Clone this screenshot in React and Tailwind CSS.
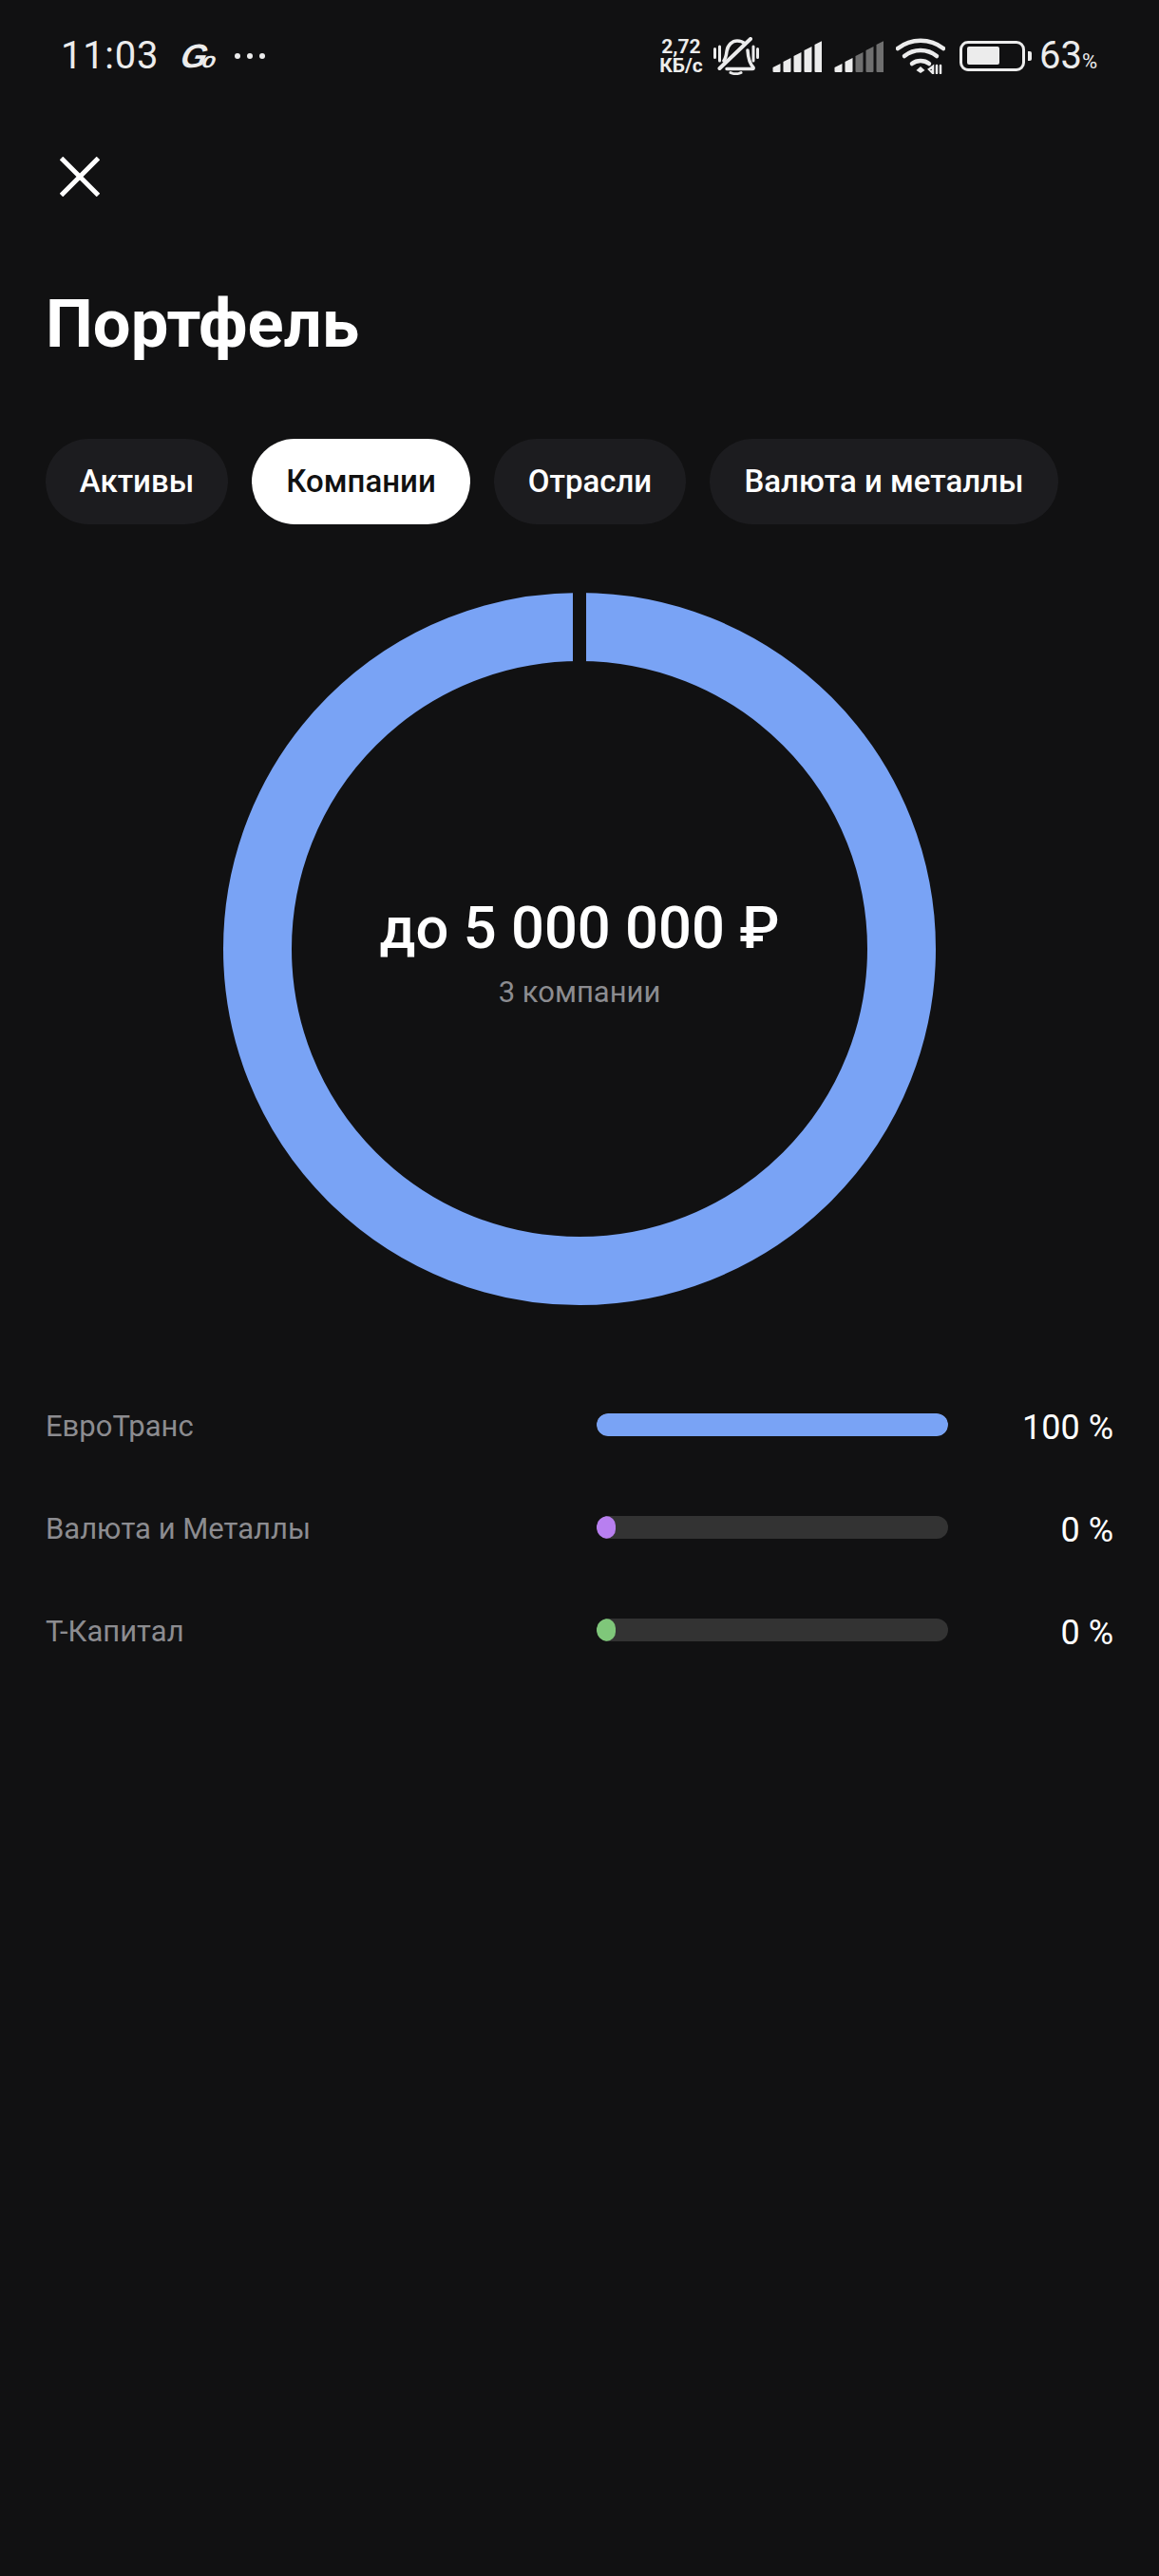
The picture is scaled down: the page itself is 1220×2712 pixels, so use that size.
import React from 'react';

const roboto = 'font-[Roboto,sans-serif]';

const tabs = [
  { label: 'Активы', width: 'w-[192px]' },
  { label: 'Компании', width: 'w-[230px]', active: true },
  { label: 'Отрасли', width: 'w-[202px]' },
  { label: 'Валюта и металлы', width: 'w-[367px]' },
];

const rows = [
  { name: 'ЕвроТранс', value: '100 %', fill: 'w-full bg-[#79a3f5]' },
  { name: 'Валюта и Металлы', value: '0 %', fill: 'w-[20px] bg-[#b87ff0]' },
  { name: 'Т-Капитал', value: '0 %', fill: 'w-[20px] bg-[#7fc77a]' },
];

function Signal({ dim }) {
  const heights = [9, 15, 21, 27, 33];
  return (
    <svg width="52" height="34" viewBox="0 0 52 34">
      {heights.map((h, i) => (
        <path
          key={i}
          d={`M${i * 11 + 0.5} ${34 - Math.max(h - 4, 3)} L${i * 11 + 8.5} ${34 - h} V33 a1 1 0 0 1 -1 1 H${i * 11 + 1.5} a1 1 0 0 1 -1 -1 Z`}
          fill={dim && i > 1 ? '#6f6f6f' : '#ececec'}
        />
      ))}
    </svg>
  );
}

function BellMuted() {
  return (
    <svg width="48" height="40" viewBox="0 0 48 40" fill="none" stroke="#ececec" strokeWidth="3.5" strokeLinecap="round" strokeLinejoin="round">
      <path d="M1.5 12.5v9M6.5 10v15M42 10v15M46.5 12.5v9" strokeWidth="3" />
      <path d="M11 25c2-3 2.500-6 3-10 1-7 6-11 11-11 3 0 6 1 8 3" />
      <path d="M36 14c.5 8 2 14 6 18 .5 1 0 1.500-1 1.500H14" />
      <path d="M18 37.500c3 1.500 8 1.500 11 0" strokeWidth="3" />
      <path d="M39 2 6.500 33" strokeWidth="4" />
    </svg>
  );
}

function Wifi() {
  return (
    <svg width="52" height="38" viewBox="0 0 52 38" fill="none" stroke="#ececec" strokeWidth="4.5" strokeLinecap="round">
      <path d="M2 11c14-11 34-11 48 0" />
      <path d="M9 19c10-8 24-8 34 0" />
      <path d="M17 27c5-4 13-4 18 0" />
      <path d="M26 30l4.500 4-4.500 3-4.500-3z" fill="#ececec" stroke="none" />
      <path d="M35 33l4-3v7zM43 29v8M47 29v8" strokeWidth="2.5" />
    </svg>
  );
}

function StatusBar() {
  return (
    <div className={`flex h-[115px] items-center pl-[64px] pr-[65px] pt-[2px] text-[#ececec] ${roboto}`}>
      <span className="text-[40px] leading-none tracking-[0.7px]">11:03</span>
      <span className="ml-[24px] flex w-[36px] -skew-x-12 items-end font-['Liberation_Sans',sans-serif] font-bold italic leading-none">
        <span className="text-[35px] leading-[30px]">G</span>
        <span className="-ml-[4px] text-[23px] leading-[22px]">o</span>
      </span>
      <div className="ml-[20px] flex gap-[7px]">
        <span className="size-[6px] rounded-full bg-[#ececec]" />
        <span className="size-[6px] rounded-full bg-[#ececec]" />
        <span className="size-[6px] rounded-full bg-[#ececec]" />
      </div>
      <div className="ml-auto flex items-center">
        <div className="flex w-[48px] flex-col items-center text-[21px] font-bold leading-[20px]">
          <span>2,72</span>
          <span>КБ/с</span>
        </div>
        <div className="ml-[10px]"><BellMuted /></div>
        <div className="ml-[14px]"><Signal /></div>
        <div className="ml-[13px]"><Signal dim /></div>
        <div className="ml-[13px]"><Wifi /></div>
        <div className="ml-[15px] flex h-[32px] w-[69px] items-center rounded-[9px] border-[3px] border-[#ececec] pl-[5px]">
          <div className="h-[19px] w-[34px] rounded-[2px] bg-[#ececec]" />
        </div>
        <div className="ml-[3px] h-[10px] w-[4px] rounded-r-[2px] bg-[#ececec]" />
        <span className="ml-[8px] text-[40px] leading-none">63</span>
        <span className="mt-[12px] text-[22px] leading-none">%</span>
      </div>
    </div>
  );
}

function Donut() {
  return (
    <div className="relative mx-auto size-[750px]">
      <svg width="750" height="750" viewBox="0 0 750 750">
        <circle cx="375" cy="375" r="339" fill="none" stroke="#79a3f5" strokeWidth="72" />
        <rect x="368" y="0" width="14" height="74" fill="#111112" />
      </svg>
      <div className="absolute inset-0 flex flex-col items-center pt-[318px]">
        <span className="text-[61.5px] font-medium leading-[70px] text-white">до 5 000 000 ₽</span>
        <span className="mt-[15px] text-[31px] leading-[36px] text-[#8c8c90]">3 компании</span>
      </div>
    </div>
  );
}

export default function App() {
  return (
    <div className={`min-h-[2712px] bg-[#111112] ${roboto}`}>
      <StatusBar />
      <div className="px-[48px]">
        <svg className="ml-[15px] mt-[50px] block" width="42" height="42" viewBox="0 0 42 42" stroke="#fff" strokeWidth="5">
          <path d="M1.500 1.500l39 39M40.500 1.500l-39 39" />
        </svg>
        <h1 className="mt-[94px] text-[70.5px] font-bold leading-[80px] text-white">Портфель</h1>
        <div className="mt-[81px] flex gap-[25px]">
          {tabs.map((t) => (
            <div
              key={t.label}
              className={`flex h-[90px] items-center justify-center rounded-full text-[33px] font-medium ${t.width} ${t.active ? 'bg-white text-[#111]' : 'bg-[#1c1c1f] text-white'}`}
            >
              {t.label}
            </div>
          ))}
        </div>
      </div>
      <div className="mt-[72px]"><Donut /></div>
      <div className="mt-[114px] flex flex-col gap-[84px] px-[48px]">
        {rows.map((r) => (
          <div key={r.name} className="flex h-[24px] items-center">
            <span className="mt-[3px] w-[580px] text-[31px] leading-none text-[#8c8c90]">{r.name}</span>
            <div className="h-[24px] w-[370px] overflow-hidden rounded-full bg-[#333]">
              <div className={`h-full rounded-full ${r.fill}`} />
            </div>
            <span className="ml-auto mt-[5px] text-[36px] leading-none text-white">{r.value}</span>
          </div>
        ))}
      </div>
    </div>
  );
}
